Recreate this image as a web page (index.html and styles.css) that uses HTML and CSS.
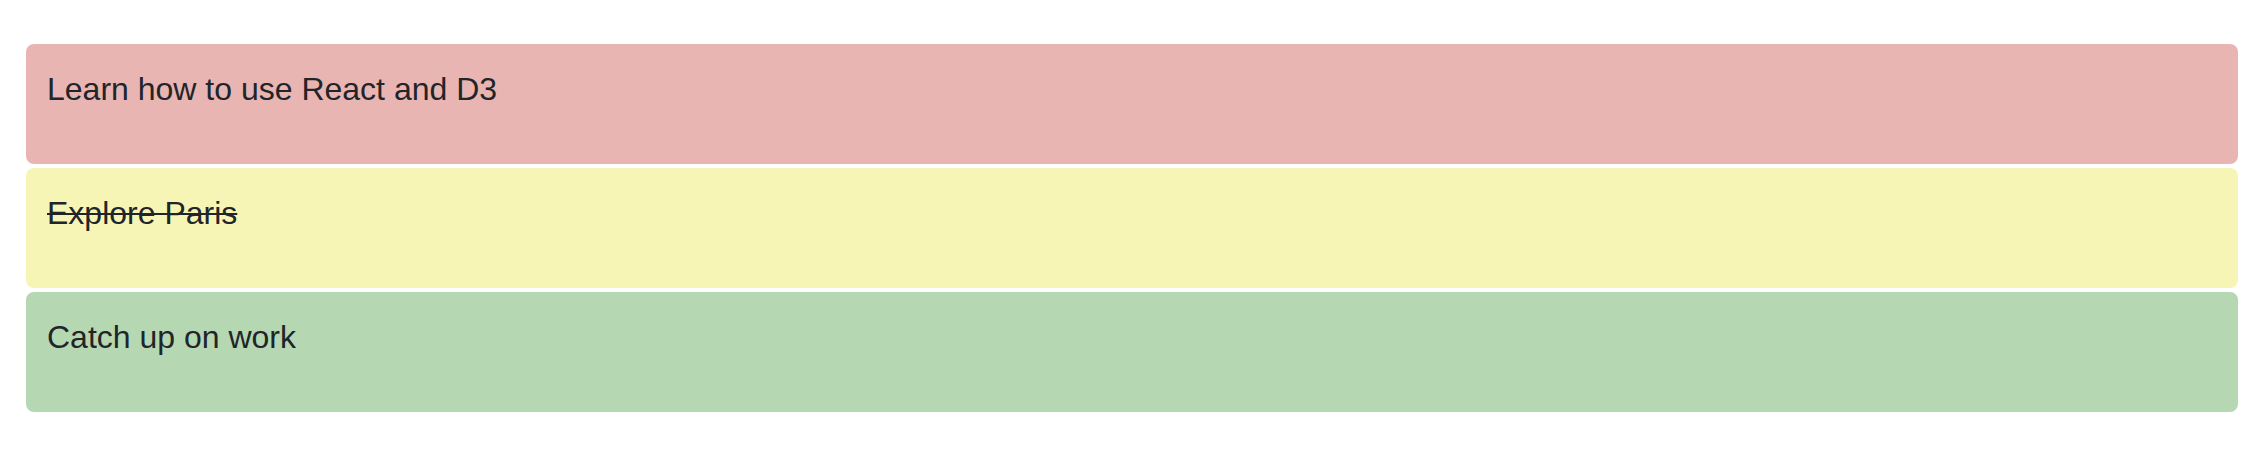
FILE: index.html
```html
<!DOCTYPE html>
<html>
<head>
<meta charset="utf-8">
<link rel="stylesheet" href="styles.css">
</head>
<body>
<div class="list">
  <div class="todo todo-red">Learn how to use React and D3</div>
  <div class="todo todo-yellow"><span class="done">Explore Paris</span></div>
  <div class="todo todo-green">Catch up on work</div>
</div>
</body>
</html>
```

FILE: styles.css
```css
html, body {
  margin: 0;
  padding: 0;
  background: #ffffff;
}
body {
  font-family: "Liberation Sans", Arial, sans-serif;
  color: #212529;
}
.list {
  display: flex;
  flex-direction: column;
  gap: 4px;
  padding: 44px 28px 0 26px;
}
.todo {
  box-sizing: border-box;
  height: 120px;
  padding: 21px 21px;
  border-radius: 8px;
  font-size: 32px;
  line-height: 48px;
}
.todo-red { background: #e9b5b2; }
.todo-yellow { background: #f7f5b5; }
.todo-green { background: #b5d8b3; }
.done {
  text-decoration: line-through;
  text-decoration-thickness: 2px;
}
```
